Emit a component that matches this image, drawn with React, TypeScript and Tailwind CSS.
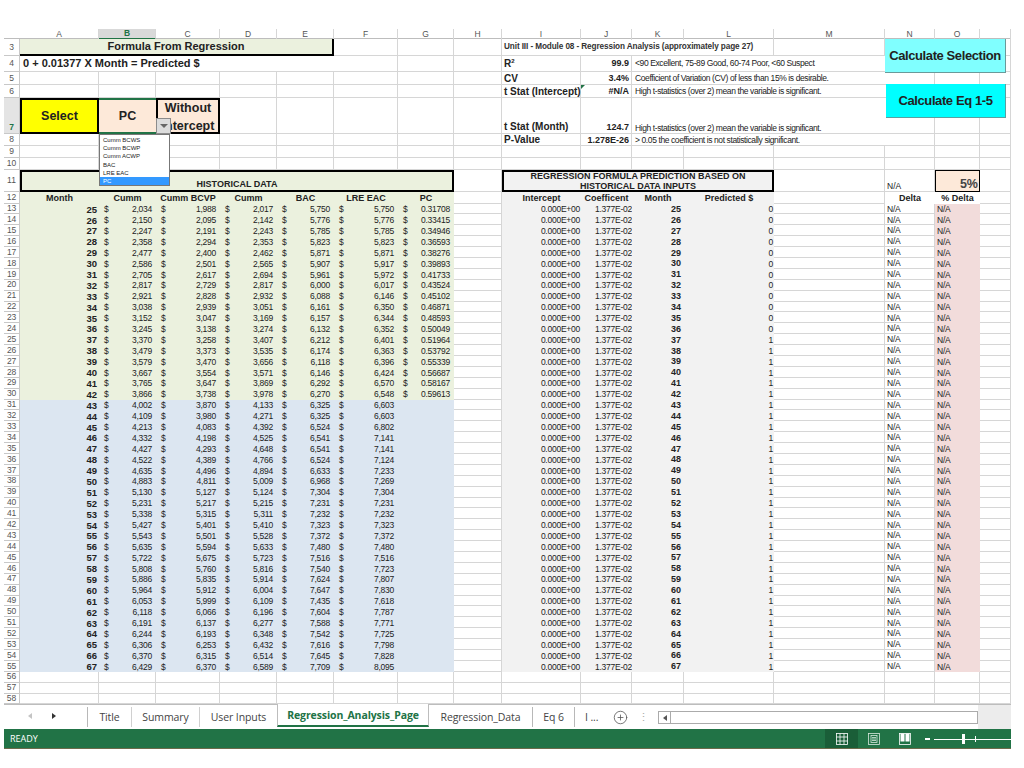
import type { ReactNode } from "react";
import { CirclePlus } from "lucide-react";

const cols =
  "grid grid-cols-[16px_79px_57px_64px_57px_57px_64px_56px_48px_79px_51px_52px_90px_111px_50px_45px_31px]";

const letters = ["A", "B", "C", "D", "E", "F", "G", "H", "I", "J", "K", "L", "M", "N", "O", ""];

// month, cumm bcws, cumm bcvp, cumm acwp, bac, lre eac, pc
const history: [number, string, string, string, string, string, string][] = [
  [25, "2,034", "1,988", "2,017", "5,750", "5,750", "0.31708"],
  [26, "2,150", "2,095", "2,142", "5,776", "5,776", "0.33415"],
  [27, "2,247", "2,191", "2,243", "5,785", "5,785", "0.34946"],
  [28, "2,358", "2,294", "2,353", "5,823", "5,823", "0.36593"],
  [29, "2,477", "2,400", "2,462", "5,871", "5,871", "0.38276"],
  [30, "2,586", "2,501", "2,565", "5,907", "5,917", "0.39893"],
  [31, "2,705", "2,617", "2,694", "5,961", "5,972", "0.41733"],
  [32, "2,817", "2,729", "2,817", "6,000", "6,017", "0.43524"],
  [33, "2,921", "2,828", "2,932", "6,088", "6,146", "0.45102"],
  [34, "3,038", "2,939", "3,051", "6,161", "6,350", "0.46871"],
  [35, "3,152", "3,047", "3,169", "6,157", "6,344", "0.48593"],
  [36, "3,245", "3,138", "3,274", "6,132", "6,352", "0.50049"],
  [37, "3,370", "3,258", "3,407", "6,212", "6,401", "0.51964"],
  [38, "3,479", "3,373", "3,535", "6,174", "6,363", "0.53792"],
  [39, "3,579", "3,470", "3,656", "6,118", "6,396", "0.55339"],
  [40, "3,667", "3,554", "3,571", "6,146", "6,424", "0.56687"],
  [41, "3,765", "3,647", "3,869", "6,292", "6,570", "0.58167"],
  [42, "3,866", "3,738", "3,978", "6,270", "6,548", "0.59613"],
  [43, "4,002", "3,870", "4,133", "6,325", "6,603", ""],
  [44, "4,109", "3,980", "4,271", "6,325", "6,603", ""],
  [45, "4,213", "4,083", "4,392", "6,524", "6,802", ""],
  [46, "4,332", "4,198", "4,525", "6,541", "7,141", ""],
  [47, "4,427", "4,293", "4,648", "6,541", "7,141", ""],
  [48, "4,522", "4,389", "4,766", "6,524", "7,124", ""],
  [49, "4,635", "4,496", "4,894", "6,633", "7,233", ""],
  [50, "4,883", "4,811", "5,009", "6,968", "7,269", ""],
  [51, "5,130", "5,127", "5,124", "7,304", "7,304", ""],
  [52, "5,231", "5,217", "5,215", "7,231", "7,231", ""],
  [53, "5,338", "5,315", "5,311", "7,232", "7,232", ""],
  [54, "5,427", "5,401", "5,410", "7,323", "7,323", ""],
  [55, "5,543", "5,501", "5,528", "7,372", "7,372", ""],
  [56, "5,635", "5,594", "5,633", "7,480", "7,480", ""],
  [57, "5,722", "5,675", "5,723", "7,516", "7,516", ""],
  [58, "5,808", "5,760", "5,816", "7,540", "7,723", ""],
  [59, "5,886", "5,835", "5,914", "7,624", "7,807", ""],
  [60, "5,964", "5,912", "6,004", "7,647", "7,830", ""],
  [61, "6,053", "5,999", "6,109", "7,435", "7,618", ""],
  [62, "6,118", "6,066", "6,196", "7,604", "7,787", ""],
  [63, "6,191", "6,137", "6,277", "7,588", "7,771", ""],
  [64, "6,244", "6,193", "6,348", "7,542", "7,725", ""],
  [65, "6,306", "6,253", "6,432", "7,616", "7,798", ""],
  [66, "6,370", "6,315", "6,514", "7,645", "7,828", ""],
  [67, "6,429", "6,370", "6,589", "7,709", "8,095", ""],
];

const dropdownItems = ["Cumm BCWS", "Cumm BCWP", "Cumm ACWP", "BAC", "LRE EAC"];

function RowNo({ n, active }: { n: number; active?: boolean }) {
  return (
    <div
      className={`flex items-center justify-center border-r border-b border-[#c8c8c8] text-[8.5px] leading-none ${
        active ? "bg-[#e4e4e4] font-bold text-[#217346] items-end pb-[2px]" : "text-[#555]"
      }`}
    >
      {n}
    </div>
  );
}

function Blank({ className = "" }: { className?: string }) {
  return <div className={`border-r border-b border-[#d6d6d6] ${className}`} />;
}

function Blanks({ count }: { count: number }) {
  return (
    <>
      {Array.from({ length: count }, (_, i) => (
        <Blank key={i} />
      ))}
    </>
  );
}

function Money({ value, bg }: { value: string; bg: string }) {
  return (
    <div className={`flex items-center justify-between pt-px pl-[5px] pr-[4px] ${bg}`}>
      <span>$</span>
      <span>{value}</span>
    </div>
  );
}

function HeaderCell({ children, bg = "" }: { children?: ReactNode; bg?: string }) {
  return (
    <div className={`flex items-center justify-center whitespace-nowrap pt-px text-[9px] font-bold leading-none ${bg}`}>
      {children}
    </div>
  );
}

function DataRow({ row, index }: { row: (typeof history)[number]; index: number }) {
  const [month, a, b, c, d, e, pc] = row;
  const bg = index < 18 ? "bg-[#ebf1de]" : "bg-[#dce6f1]";
  return (
    <div className={`${cols} h-[10.9px] text-[8.5px] leading-none tracking-[-0.25px] text-[#222]`}>
      <RowNo n={13 + index} />
      <div className={`flex items-center justify-end pt-px pr-[2px] text-[9.5px] font-bold tracking-normal ${bg}`}>{month}</div>
      <Money value={a} bg={bg} />
      <Money value={b} bg={bg} />
      <Money value={c} bg={bg} />
      <Money value={d} bg={bg} />
      <Money value={e} bg={bg} />
      {pc ? <Money value={pc} bg={bg} /> : <div className={bg} />}
      <Blank />
      <div className="flex items-center justify-end bg-[#f2f2f2] pt-px pr-[1px]">0.000E+00</div>
      <div className="flex items-center justify-end bg-[#f2f2f2] pt-px">1.377E-02</div>
      <div className="flex items-center justify-end bg-[#f2f2f2] pt-px pr-[3px] text-[9px] font-bold tracking-normal">{month}</div>
      <div className="flex items-center justify-end bg-[#f2f2f2] pt-px pr-[1px]">{month < 37 ? 0 : 1}</div>
      <Blank />
      <div className="flex items-center border-r border-b border-[#d6d6d6] pt-px pl-[2px]">N/A</div>
      <div className="flex items-center bg-[#f2dcdb] pt-px pl-[2px]">N/A</div>
      <Blank />
    </div>
  );
}

function Sheet() {
  return (
    <div className="relative text-[#222]">
      {/* column letters */}
      <div className={`${cols} h-[10px] border-b border-[#bdbdbd] text-[8.5px] leading-none text-[#555]`}>
        <div />
        {letters.map((l, i) => (
          <div
            key={i}
            className={`flex items-center justify-center border-r border-[#d6d6d6] ${
              l === "B" ? "border-b-2 border-b-[#217346] bg-[#d9d9d9] font-bold text-[#217346]" : ""
            }`}
          >
            {l}
          </div>
        ))}
      </div>

      {/* row 3 */}
      <div className={`${cols} h-[17px] grid-rows-[17px]`}>
        <RowNo n={3} />
        <div className="col-span-5 flex items-center justify-center border-r-2 border-b-2 border-black bg-[#ebf1de] text-[11px] font-bold leading-none">
          Formula From Regression
        </div>
        <Blanks count={3} />
        <div className="col-span-4 flex items-center whitespace-nowrap border-r border-b border-[#d6d6d6] pl-[2px] text-[8.2px] font-bold leading-none tracking-[-0.1px] text-[#333]">
          Unit III - Module 08 - Regression Analysis (approximately page 27)
        </div>
        <Blanks count={4} />
      </div>

      {/* row 4 */}
      <div className={`${cols} h-[16px] grid-rows-[16px]`}>
        <RowNo n={4} />
        <div className="col-span-5 flex items-center whitespace-nowrap border-b border-[#d6d6d6] pl-[3px] text-[11px] font-bold leading-none">
          0 + 0.01377 X Month = Predicted $
        </div>
        <Blanks count={3} />
        <div className="flex items-center border-r border-b border-[#d6d6d6] pl-[2px] text-[10px] font-bold leading-none">
          R<sup className="text-[6px]">2</sup>
        </div>
        <div className="flex items-center justify-end border-r border-b border-[#d6d6d6] pr-[2px] text-[9px] font-bold leading-none">99.9</div>
        <div className="col-span-3 flex items-center whitespace-nowrap border-b border-[#d6d6d6] pl-[3px] text-[8.5px] leading-none tracking-[-0.4px]">
          &lt;90 Excellent, 75-89 Good, 60-74 Poor, &lt;60 Suspect
        </div>
        <Blanks count={3} />
      </div>

      {/* row 5 */}
      <div className={`${cols} h-[13px] grid-rows-[13px]`}>
        <RowNo n={5} />
        <Blanks count={8} />
        <div className="flex items-center border-r border-b border-[#d6d6d6] pt-px pl-[2px] text-[10px] font-bold leading-none">CV</div>
        <div className="flex items-center justify-end border-r border-b border-[#d6d6d6] pt-px pr-[2px] text-[9px] font-bold leading-none">3.4%</div>
        <div className="col-span-3 flex items-center whitespace-nowrap border-b border-[#d6d6d6] pt-px pl-[3px] text-[8.5px] leading-none tracking-[-0.4px]">
          Coefficient of Variation (CV) of less than 15% is desirable.
        </div>
        <Blanks count={3} />
      </div>

      {/* row 6 */}
      <div className={`${cols} h-[13px] grid-rows-[13px]`}>
        <RowNo n={6} />
        <Blanks count={8} />
        <div className="flex items-center whitespace-nowrap border-r border-b border-[#d6d6d6] pt-px pl-[2px] text-[10px] font-bold leading-none">t Stat (Intercept)</div>
        <div className="relative flex items-center justify-end border-r border-b border-[#d6d6d6] pt-px pr-[2px] text-[9px] font-bold leading-none">
          <span className="absolute top-0 left-0 h-0 w-0 border-t-[4px] border-r-[4px] border-t-[#217346] border-r-transparent" />
          #N/A
        </div>
        <div className="col-span-3 flex items-center whitespace-nowrap border-b border-[#d6d6d6] pt-px pl-[3px] text-[8.5px] leading-none tracking-[-0.4px]">
          High t-statistics (over 2) mean the variable is significant.
        </div>
        <Blanks count={3} />
      </div>

      {/* row 7 */}
      <div className={`${cols} h-[36px] grid-rows-[36px]`}>
        <RowNo n={7} active />
        <div className="flex items-center justify-center border-2 border-black bg-[#ffff00] text-[12.5px] font-bold leading-none">Select</div>
        <div className="flex items-center justify-center border-y-2 border-[#217346] bg-[#fde9d9] text-[12.5px] font-bold leading-none">PC</div>
        <div className="overflow-hidden border-2 border-black bg-[#fde9d9] text-center text-[12.5px] font-bold leading-[17.5px]">
          Without
          <br />
          Intercept
        </div>
        <Blanks count={5} />
        <div className="flex items-end border-r border-b border-[#d6d6d6] pb-[1px] pl-[2px] text-[10px] font-bold leading-none">t Stat (Month)</div>
        <div className="flex items-end justify-end border-r border-b border-[#d6d6d6] pb-[1px] pr-[2px] text-[9px] font-bold leading-none">124.7</div>
        <div className="col-span-3 flex items-end whitespace-nowrap border-b border-[#d6d6d6] pb-[1px] pl-[3px] text-[8.5px] leading-none tracking-[-0.4px]">
          High t-statistics (over 2) mean the variable is significant.
        </div>
        <Blanks count={3} />
      </div>

      {/* row 8 */}
      <div className={`${cols} h-[12px] grid-rows-[12px]`}>
        <RowNo n={8} />
        <Blanks count={8} />
        <div className="flex items-center border-r border-b border-[#d6d6d6] pt-px pl-[2px] text-[10px] font-bold leading-none">P-Value</div>
        <div className="flex items-center justify-end whitespace-nowrap border-r border-b border-[#d6d6d6] pt-px pr-[2px] text-[9px] font-bold leading-none">1.278E-26</div>
        <div className="col-span-3 flex items-center whitespace-nowrap border-b border-[#d6d6d6] pt-px pl-[3px] text-[8.5px] leading-none tracking-[-0.4px]">
          &gt; 0.05 the coefficient is not statistically significant.
        </div>
        <Blanks count={3} />
      </div>

      {/* rows 9, 10 */}
      {[9, 10].map((n) => (
        <div key={n} className={`${cols} h-[12px]`}>
          <RowNo n={n} />
          <Blanks count={16} />
        </div>
      ))}

      {/* row 11 */}
      <div className={`${cols} h-[22px] grid-rows-[22px]`}>
        <RowNo n={11} />
        <div className="col-span-7 flex items-end justify-center border-2 border-black bg-[#ebf1de] pb-[1px] text-[9px] font-bold leading-none">
          HISTORICAL DATA
        </div>
        <Blank />
        <div className="col-span-4 flex items-center justify-center border-2 border-black bg-[#f2f2f2] text-center text-[9px] font-bold leading-[10.5px]">
          <span>
            REGRESSION FORMULA PREDICTION BASED ON
            <br />
            HISTORICAL DATA INPUTS
          </span>
        </div>
        <Blank />
        <div className="flex items-end border-r border-b border-[#d6d6d6] pb-[1px] pl-[2px] text-[8.5px] leading-none">N/A</div>
        <div className="flex items-end justify-end border border-black bg-[#fde9d9] pr-[1px] pb-[1px] text-[12.5px] font-bold leading-none text-[#444]">5%</div>
        <Blank />
      </div>

      {/* row 12 */}
      <div className={`${cols} h-[11.5px]`}>
        <RowNo n={12} />
        {["Month", "Cumm", "Cumm BCVP", "Cumm", "BAC", "LRE EAC", "PC"].map((t, i) => (
          <HeaderCell key={i} bg="bg-[#ebf1de]">
            {t}
          </HeaderCell>
        ))}
        <Blank />
        {["Intercept", "Coefficent", "Month", "Predicted $"].map((t) => (
          <HeaderCell key={t} bg="bg-[#f2f2f2]">
            {t}
          </HeaderCell>
        ))}
        <Blank />
        <HeaderCell>Delta</HeaderCell>
        <HeaderCell>% Delta</HeaderCell>
        <Blank />
      </div>

      {history.map((row, i) => (
        <DataRow key={row[0]} row={row} index={i} />
      ))}

      {[56, 57, 58].map((n) => (
        <div key={n} className={`${cols} h-[10.9px]`}>
          <RowNo n={n} />
          <Blanks count={16} />
        </div>
      ))}

      {/* macro buttons */}
      <div className="absolute top-[10px] left-[881px] flex h-[34px] w-[121px] items-center justify-center whitespace-nowrap border-r border-b border-[#6a9a9a] bg-[#80ffff] text-[13px] font-bold leading-none tracking-[-0.4px]">
        Calculate Selection
      </div>
      <div className="absolute top-[55px] left-[882px] flex h-[34px] w-[120px] items-center justify-center whitespace-nowrap border-r border-b border-[#5aa0a0] bg-[#00ffff] text-[13px] font-bold leading-none tracking-[-0.4px]">
        Calculate Eq 1-5
      </div>

      {/* data validation arrow and list */}
      <div className="absolute top-[89px] left-[152px] flex h-[16px] w-[15px] items-center justify-center border border-[#8c8c8c] bg-[#dcdcdc]">
        <span className="h-0 w-0 border-x-[4px] border-t-[4px] border-x-transparent border-t-[#666]" />
      </div>
      <div className="absolute top-[105px] left-[95px] w-[71px] border border-[#777] bg-white pt-[1px] text-[6px] leading-[8.2px] text-[#222]">
        {dropdownItems.map((t) => (
          <div key={t} className="pl-[3px]">
            {t}
          </div>
        ))}
        <div className="bg-[#3399ff] pl-[3px] text-white">PC</div>
      </div>
    </div>
  );
}

function Tab({ children, className = "" }: { children: ReactNode; className?: string }) {
  return <div className={`flex h-[20px] items-center whitespace-nowrap ${className}`}>{children}</div>;
}

function TabBar() {
  return (
    <div className="flex h-[25px] items-start border-t border-[#bdbdbd] font-['Open_Sans'] text-[10.5px] leading-none tracking-[-0.1px] text-[#444]">
      <div className="flex h-[22px] w-[83px] shrink-0 items-center">
        <span className="ml-[24px] h-0 w-0 border-y-[3px] border-r-[4px] border-y-transparent border-r-[#c4c4c4]" />
        <span className="ml-[20px] h-0 w-0 border-y-[3px] border-l-[4px] border-y-transparent border-l-[#333]" />
      </div>
      <Tab className="mt-[2px] w-[44px] justify-center border-l border-[#b8b8b8]">Title</Tab>
      <Tab className="mt-[2px] w-[68px] justify-center border-l border-[#d0d0d0]">Summary</Tab>
      <Tab className="mt-[2px] w-[78px] justify-center border-l border-[#d0d0d0]">User Inputs</Tab>
      <div className="-mt-px flex h-[23px] w-[152px] shrink-0 items-center justify-center border-x border-b-2 border-x-[#bdbdbd] border-b-[#217346] bg-white font-bold text-[#217346]">
        Regression_Analysis_Page
      </div>
      <Tab className="mt-[2px] w-[103px] justify-center">Regression_Data</Tab>
      <Tab className="mt-[2px] w-[42px] justify-center border-l border-[#b8b8b8]">Eq 6</Tab>
      <Tab className="mt-[2px] w-[38px] justify-start border-l border-[#b8b8b8] pl-[10px]">I ...</Tab>
      <div className="mt-[2px] flex h-[20px] w-[16px] items-center justify-center">
        <CirclePlus size={15} strokeWidth={1.25} color="#555" />
      </div>
      <div className="mt-[2px] flex h-[20px] w-[30px] items-center justify-center text-[#aaa]">⋮</div>
      <div className="mt-[6px] flex h-[13px] w-[320px] border border-[#ababab] bg-white">
        <div className="flex w-[12px] items-center justify-center border-r border-[#ababab]">
          <span className="h-0 w-0 border-y-[3px] border-r-[4px] border-y-transparent border-r-[#555]" />
        </div>
      </div>
      <div className="h-full flex-1 bg-[#ececec]" />
    </div>
  );
}

function StatusBar() {
  return (
    <div className="flex h-[20px] items-stretch border-b border-[#6b6b4a] bg-[#217346] font-['Open_Sans'] text-white">
      <div className="flex flex-1 items-center pl-[6px] text-[9px] leading-none">READY</div>
      <div className="flex w-[33px] items-center justify-center bg-[#1a5e38]">
        <svg width="12" height="12" viewBox="0 0 12 12" fill="none" stroke="#fff" strokeWidth="0.8">
          <rect x="0.5" y="0.5" width="11" height="11" />
          <path d="M4 0.5V11.5M8 0.5V11.5M0.5 4H11.5M0.5 8H11.5" />
        </svg>
      </div>
      <div className="flex w-[31px] items-center justify-center">
        <svg width="12" height="12" viewBox="0 0 12 12" fill="none" stroke="#d8e8de" strokeWidth="0.8">
          <rect x="0.5" y="0.5" width="11" height="11" />
          <rect x="3" y="2.5" width="6" height="7" />
          <path d="M4 4.5H8M4 6H8M4 7.5H8" />
        </svg>
      </div>
      <div className="flex w-[31px] items-center justify-center">
        <svg width="12" height="12" viewBox="0 0 12 12" fill="none">
          <rect x="0.5" y="0.5" width="11" height="11" stroke="#fff" strokeWidth="0.8" />
          <rect x="1.5" y="0.5" width="4" height="8" fill="#fff" />
          <rect x="6.5" y="0.5" width="4" height="8" fill="#fff" />
        </svg>
      </div>
      <div className="relative w-[91px]">
        <span className="absolute top-[9px] left-[5px] h-[2px] w-[5px] bg-white" />
        <span className="absolute top-[9.5px] left-[14px] h-px w-[77px] bg-white" />
        <span className="absolute top-[5px] left-[42px] h-[10px] w-[3px] bg-white" />
        <span className="absolute top-[7px] left-[55px] h-[6px] w-px bg-white" />
      </div>
    </div>
  );
}

export default function App() {
  return (
    <div className="h-[768px] w-[1024px] overflow-hidden bg-white pt-[29px] pr-[13px] pl-[4px] font-['Liberation_Sans',Arial,sans-serif]">
      <Sheet />
      <TabBar />
      <StatusBar />
    </div>
  );
}
